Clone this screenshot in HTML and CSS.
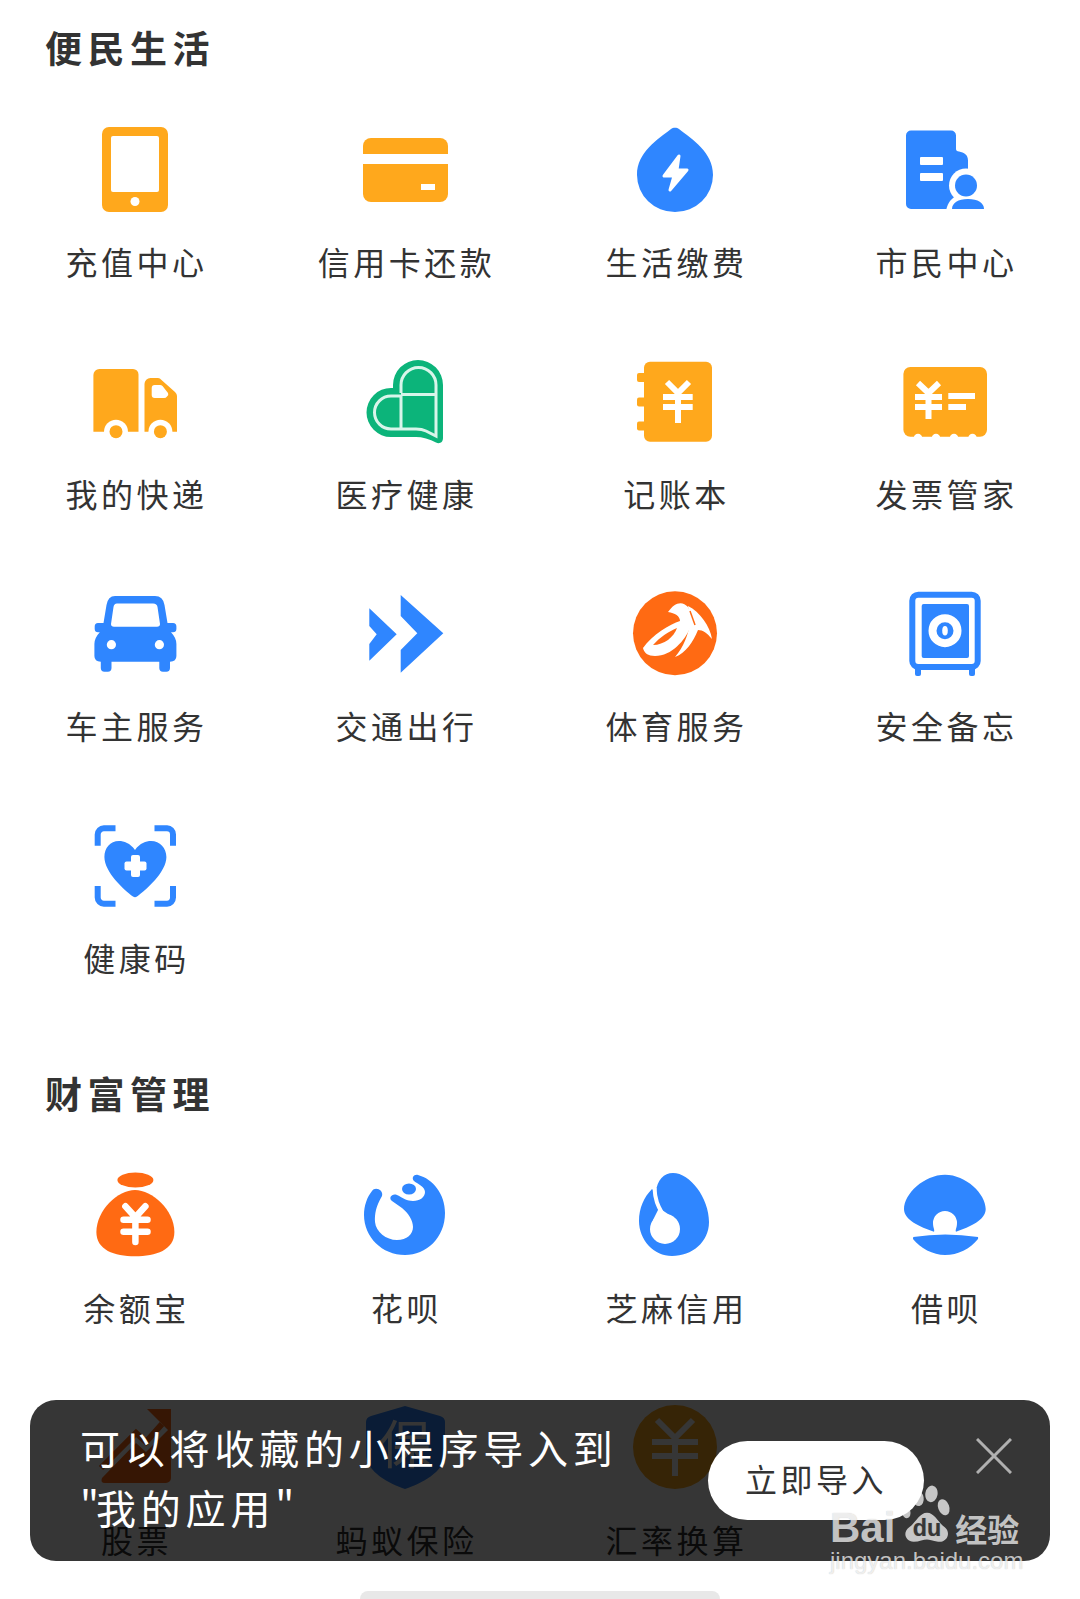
FILE: index.html
```html
<!DOCTYPE html>
<html lang="zh-CN">
<head>
    <meta charset="UTF-8">
    <meta name="viewport" content="width=device-width, initial-scale=1.0">
    <title>全部应用</title>
    <link rel="stylesheet" href="styles.css">
</head>
<body>
    <section class="section">
        <h2 class="section-title">便民生活</h2>
        <div class="app-grid">
            <div class="app">
                <svg class="icon" viewBox="0 0 90 90">
                    <rect x="12" y="3" width="66" height="85" rx="7" fill="#ffa81c"/>
                    <rect x="21" y="12" width="48" height="56" rx="2" fill="#fff"/>
                    <circle cx="45" cy="77.5" r="4.5" fill="#fff"/>
                </svg>
                <span class="app-name">充值中心</span>
            </div>
            <div class="app">
                <svg class="icon" viewBox="0 0 90 90">
                    <path d="M3 30v-8a8 8 0 0 1 8-8h69a8 8 0 0 1 8 8v8z" fill="#ffa81c"/>
                    <path d="M3 40h85v30a8 8 0 0 1-8 8H11a8 8 0 0 1-8-8z" fill="#ffa81c"/>
                    <rect x="61" y="60" width="14" height="6" fill="#fff"/>
                </svg>
                <span class="app-name">信用卡还款</span>
            </div>
            <div class="app">
                <svg class="icon" viewBox="0 0 90 90">
                    <path d="M41 5C43 3.2 47 3.2 49 5C62 15 83 28 83 51A38 37 0 0 1 7 51C7 28 28 15 41 5Z" fill="#2f86ff"/>
                    <path d="M49 32L34 52H44L40 66L57 46H47Z" fill="#fff" stroke="#fff" stroke-width="3" stroke-linejoin="round"/>
                </svg>
                <span class="app-name">生活缴费</span>
            </div>
            <div class="app">
                <svg class="icon" viewBox="0 0 90 90">
                    <path d="M11 6.500H51a5 5 0 0 1 5 5V25q0 2 3 2.500c5 1 9 3 9 9V85H11a5 5 0 0 1-5-5V11.500a5 5 0 0 1 5-5z" fill="#2f86ff"/>
                    <rect x="20" y="33" width="23" height="8" rx="1" fill="#fff"/>
                    <rect x="20" y="49" width="23" height="8" rx="1" fill="#fff"/>
                    <circle cx="66" cy="61.500" r="17" fill="#fff"/>
                    <path d="M46 90C46 76 56 70 66 70C78 70 88 76 90 90Z" fill="#fff"/>
                    <circle cx="66" cy="61.500" r="11" fill="#2f86ff"/>
                    <path d="M52 85C52 79 58 75 68 75C78 75 84 79 84 85Z" fill="#2f86ff"/>
                </svg>
                <span class="app-name">市民中心</span>
            </div>

            <div class="app">
                <svg class="icon" viewBox="0 0 90 90">
                    <path d="M3.400 75.700V19a6 6 0 0 1 6-6H43a5.500 5.500 0 0 1 5.500 5.500V75.700z" fill="#ffa81c"/>
                    <path d="M54.500 75.700V28a6 6 0 0 1 6-6H68q2 0 3.500 2L85 36q2 2 2 4V75.700z" fill="#ffa81c"/>
                    <path d="M61.700 32a3 3 0 0 1 3-3H70q1.500 0 2.500 1L78 37q1 2-1 3.500Q76 42 74 42H64.700a3 3 0 0 1-3-3z" fill="#fff"/>
                    <circle cx="26" cy="75.700" r="12" fill="#fff"/>
                    <circle cx="70.400" cy="75.700" r="12" fill="#fff"/>
                    <circle cx="26" cy="75.700" r="6.500" fill="#ffa81c"/>
                    <circle cx="70.400" cy="75.700" r="6.500" fill="#ffa81c"/>
                </svg>
                <span class="app-name">我的快递</span>
            </div>
            <div class="app">
                <svg class="icon" viewBox="0 0 90 90">
                    <path d="M33 32V29A25 25 0 0 1 83 29V82C83 87 79 88 76 86.500C70 83 62 81 56 81H31A24.500 24.500 0 0 1 31 32Z" fill="#0cb47a"/>
                    <path d="M41 37V29A17 17 0 0 1 76 29V80L66 75Q62 73 56 73H31A16.500 16.500 0 0 1 31 40H41V73M41 38.500H76" fill="none" stroke="#d8f5ea" stroke-width="3"/>
                </svg>
                <span class="app-name">医疗健康</span>
            </div>
            <div class="app">
                <svg class="icon" viewBox="0 0 90 90">
                    <rect x="14" y="5.700" width="68" height="80" rx="6" fill="#ffa81c"/>
                    <rect x="7" y="17" width="10" height="9" rx="2" fill="#ffa81c"/>
                    <rect x="7" y="41.500" width="10" height="9" rx="2" fill="#ffa81c"/>
                    <rect x="7" y="65.500" width="10" height="9" rx="2" fill="#ffa81c"/>
                    <path d="M37 26L48 37L59 26M33 41H62.700M33 51H62.700M48 37V67" fill="none" stroke="#fff" stroke-width="6"/>
                </svg>
                <span class="app-name">记账本</span>
            </div>
            <div class="app">
                <svg class="icon" viewBox="0 0 90 90">
                    <rect x="3.400" y="11" width="83.600" height="69.700" rx="7" fill="#ffa81c"/>
                    <circle cx="18" cy="82" r="4.200" fill="#fff"/>
                    <circle cx="36" cy="82" r="4.200" fill="#fff"/>
                    <circle cx="54" cy="82" r="4.200" fill="#fff"/>
                    <circle cx="72.500" cy="82" r="4.200" fill="#fff"/>
                    <path d="M18 27L28.500 37L39 27M15 41H42M15 51H42M28.500 37V63M48.300 40H75M48.300 51H66" fill="none" stroke="#fff" stroke-width="6"/>
                </svg>
                <span class="app-name">发票管家</span>
            </div>

            <div class="app">
                <svg class="icon" viewBox="0 0 90 90">
                    <path d="M25 8H65Q73 8 74.500 17L77.500 35H83A3.500 3.500 0 0 1 86.400 38.500V41A3.500 3.500 0 0 1 83 44.300H81Q86.400 50 86.400 56V68Q86.400 73.700 80 73.700V80A3.700 3.700 0 0 1 76.300 83.700H73A3.700 3.700 0 0 1 69.300 80V73.700H21.500V80A3.700 3.700 0 0 1 17.800 83.700H14.500A3.700 3.700 0 0 1 10.800 80V73.700Q4.400 73.700 4.400 68V56Q4.400 50 9.800 44.300H8A3.500 3.500 0 0 1 4.700 41V38.500A3.500 3.500 0 0 1 8 35H13.500L16.500 17Q18 8 25 8Z" fill="#2f86ff"/>
                    <path d="M27 15.500H63Q67 15.500 67.500 19L70 36Q70 38.700 67 38.700H24Q21 38.700 21 36L23.500 19Q24 15.500 27 15.500Z" fill="#fff"/>
                    <circle cx="21.400" cy="56.700" r="4.600" fill="#fff"/>
                    <circle cx="69.400" cy="56.700" r="4.600" fill="#fff"/>
                </svg>
                <span class="app-name">车主服务</span>
            </div>
            <div class="app">
                <svg class="icon" viewBox="0 0 90 90">
                    <path d="M9.300 20.300L36.700 46.300L9.300 72.700V56L16.700 46.300L9.300 38Z" fill="#2f86ff"/>
                    <path d="M40.700 7L83.300 45.300L40.700 84.700V62L57.300 45.300L40.700 28Z" fill="#2f86ff"/>
                </svg>
                <span class="app-name">交通出行</span>
            </div>
            <div class="app">
                <svg class="icon" viewBox="0 0 90 90">
                    <circle cx="45" cy="45.300" r="42" fill="#ff6a13"/>
                    <path d="M13 60C22 47 40 36 50 33C50 28 45 25 38 24C44 15 52 12 58 19C61 26 63 34 60 40C55 52 42 68 25 68C18 68 14 65 13 60Z" fill="#fff"/>
                    <path d="M23 57C30 49 38 44 47 40C44 49 34 57 23 57Z" fill="#ff6a13"/>
                    <path d="M58 18C70 24 80 38 82 51C77 45 73 42 68 42C63 54 56 65 45 69C54 59 58 46 60 36Z" fill="#fff"/>
                    <path d="M60 23L65 37" fill="none" stroke="#ff6a13" stroke-width="1.500"/>
                </svg>
                <span class="app-name">体育服务</span>
            </div>
            <div class="app">
                <svg class="icon" viewBox="0 0 90 90">
                    <rect x="15" y="76" width="6" height="12" rx="2" fill="#2f86ff"/>
                    <rect x="69" y="76" width="6" height="12" rx="2" fill="#2f86ff"/>
                    <rect x="12.300" y="6.700" width="65.400" height="72.300" rx="6" fill="#fff" stroke="#2f86ff" stroke-width="6"/>
                    <rect x="21.700" y="16" width="47.300" height="54" rx="2" fill="#2f86ff"/>
                    <circle cx="45" cy="42.700" r="12.500" fill="none" stroke="#fff" stroke-width="8"/>
                    <ellipse cx="45" cy="42.700" rx="2.800" ry="4.800" fill="#fff"/>
                </svg>
                <span class="app-name">安全备忘</span>
            </div>

            <div class="app">
                <svg class="icon" viewBox="0 0 90 90">
                    <path d="M7.700 25.700V14.500A6.200 6.200 0 0 1 14 8.300H25.500M64.500 8.300H77A6.200 6.200 0 0 1 83 14.500V25.700M83 66V77.500A6.200 6.200 0 0 1 77 83.700H64.500M25.500 83.700H14A6.200 6.200 0 0 1 7.700 77.500V66" fill="none" stroke="#2f86ff" stroke-width="6"/>
                    <path d="M45 30C40 23 34 21 29 21C20 21 14.400 28 14.400 37C14.400 52 34 70 43 76.500Q45 78 47 76.500C56 70 76.400 52 76.400 37C76.400 28 70 21 61 21C56 21 50 23 45 30Z" fill="#2f86ff"/>
                    <rect x="34.500" y="41.500" width="22" height="9" rx="2" fill="#fff"/>
                    <rect x="41" y="35" width="9" height="22" rx="2" fill="#fff"/>
                </svg>
                <span class="app-name">健康码</span>
            </div>
        </div>
    </section>

    <section class="section section-wealth">
        <h2 class="section-title">财富管理</h2>
        <div class="app-grid">
            <div class="app">
                <svg class="icon" viewBox="0 0 90 90">
                    <ellipse cx="45.400" cy="10" rx="18" ry="7.500" fill="#ff6a13"/>
                    <path d="M45 20C62 20 84.400 40 84.400 62C84.400 80 66 86.300 45 86.300C24 86.300 6.400 80 6.400 62C6.400 40 28 20 45 20Z" fill="#ff6a13"/>
                    <path d="M35.400 36.300L45.400 47.300L55.400 36.300M33.500 49.700H57.500M33.500 61.700H57.500M45.400 47.300V72" fill="none" stroke="#fff" stroke-width="6.500" stroke-linecap="round"/>
                </svg>
                <span class="app-name">余额宝</span>
            </div>
            <div class="app">
                <svg class="icon" viewBox="0 0 90 90">
                    <path d="M22 26C16 36 14.500 44 15 52C16 62 26 70 37 70C47 70 53 64 53 57C53 50 48 43 42 38L32 31C28 28 32 23 37 25C43 28 47 31 53 31C60 31 65 27 65 22C65 17 58 14 54 11C51 8 54 4 58 5C73 9 85 24 85 43C85 68 66 85 45 85C22 85 4 67 4 45C4 36 7 27 12 21C15 16 24 20 22 26Z" fill="#2f86ff"/>
                    <ellipse cx="49" cy="19" rx="7" ry="5.500" fill="#2f86ff"/>
                </svg>
                <span class="app-name">花呗</span>
            </div>
            <div class="app">
                <svg class="icon" viewBox="0 0 90 90">
                    <path d="M43 3C60 3 79 28 79 52C79 72 62 86 42 86C24 86 9 70 9 51C9 38 14 27 22 19L26 22C27 10 34 3 43 3Z" fill="#2f86ff"/>
                    <path d="M24.500 18C25 30 28 36 32 43" fill="none" stroke="#fff" stroke-width="4"/>
                    <path d="M29 38L23 50H47L35 42Z" fill="#fff"/>
                    <circle cx="35" cy="59" r="15" fill="#fff"/>
                </svg>
                <span class="app-name">芝麻信用</span>
            </div>
            <div class="app">
                <svg class="icon" viewBox="0 0 90 90">
                    <path d="M45 4.700C66 4.700 85.700 24 85.700 39C85.700 50 70 57 56 61.700C55 60 57 58 57 53A12 12 0 0 0 33 53C33 58 35 60 34 61.700C20 57 4 50 4 39C4 24 24 4.700 45 4.700Z" fill="#2f86ff"/>
                    <path d="M13.300 67Q45 62 78 67Q78.300 68 78 69C70 79 58 85 45 85C33 85 20 78 13 69Q13 68 13.300 67Z" fill="#2f86ff"/>
                </svg>
                <span class="app-name">借呗</span>
            </div>

            <div class="app">
                <svg class="icon" viewBox="0 0 90 90">
                    <path d="M12 76L46 41L56 50L81 25V76A5 5 0 0 1 76 81H15Q10 81 12 76Z" fill="#ff6a13"/>
                    <path d="M11 66L46 31L56 40L72 22" fill="none" stroke="#ff6a13" stroke-width="6"/>
                    <path d="M57 7H81V31Z" fill="#ff6a13"/>
                </svg>
                <span class="app-name">股票</span>
            </div>
            <div class="app">
                <svg class="icon" viewBox="0 0 90 90">
                    <path d="M45 4L80 14Q85 15.500 85 20V52C85 70 60 82 45 87C30 82 6 70 6 52V20Q6 15.500 11 14Z" fill="#2f86ff"/>
                    <text class="shield-text" x="45" y="62" text-anchor="middle">保</text>
                </svg>
                <span class="app-name">蚂蚁保险</span>
            </div>
            <div class="app">
                <svg class="icon" viewBox="0 0 90 90">
                    <circle cx="45" cy="45" r="42" fill="#ffa81c"/>
                    <path d="M27 18L45 36L63 18M22 40H68M22 54H68M45 36V74" fill="none" stroke="#fff" stroke-width="6"/>
                </svg>
                <span class="app-name">汇率换算</span>
            </div>
        </div>
    </section>

    <div class="toast">
        <p class="toast-text">可以将收藏的小程序导入到<br><span class="toast-quote">"</span>我的应用<span class="toast-quote">"</span></p>
        <button class="toast-btn">立即导入</button>
        <svg class="toast-close" viewBox="0 0 36 36">
            <path d="M1 1L35 35M35 1L1 35" fill="none" stroke="#b0b0b0" stroke-width="3"/>
        </svg>
    </div>

    <div class="watermark">
        <div class="watermark-logo">
            <span class="watermark-bai">Bai</span>
            <svg class="watermark-paw" viewBox="0 0 50 54">
                <ellipse cx="6" cy="24" rx="4" ry="6" transform="rotate(-15 6 24)"/>
                <ellipse cx="17" cy="12" rx="5" ry="7" transform="rotate(-10 17 12)"/>
                <ellipse cx="29" cy="8" rx="5.500" ry="7.500" transform="rotate(10 29 8)"/>
                <ellipse cx="40" cy="20" rx="5" ry="7.500" transform="rotate(-20 40 20)"/>
                <path d="M25 25C32 25 35 34 41 38C47 43 43 52 35 51C30 50 27 49 25 49C22 49 18 51 13 51C5 51 3 42 9 38C15 34 18 25 25 25Z"/>
                <text class="watermark-du" x="25" y="46" text-anchor="middle">du</text>
            </svg>
            <span class="watermark-cn">经验</span>
        </div>
        <div class="watermark-url">jingyan.baidu.com</div>
    </div>

    <div class="home-bar"></div>
</body>
</html>
```

FILE: styles.css
```css
* {
    margin: 0;
    padding: 0;
    box-sizing: border-box;
}

body {
    position: relative;
    width: 1080px;
    height: 1599px;
    overflow: hidden;
    background: #fff;
    color: #333;
    font-family: "Noto Sans CJK SC", "Noto Sans", sans-serif;
}

.section {
    padding-top: 22px;
}

.section-wealth {
    padding-top: 89px;
}

.section-title {
    padding-left: 45px;
    font-size: 37px;
    line-height: 50px;
    font-weight: 700;
    letter-spacing: 5.500px;
}

.app-grid {
    display: grid;
    grid-template-columns: repeat(4, 1fr);
    row-gap: 73px;
    margin-top: 52px;
}

.app {
    display: flex;
    flex-direction: column;
    align-items: center;
}

.icon {
    display: block;
    width: 90px;
    height: 90px;
}

.app-name {
    margin-top: 25px;
    padding-left: 3px;
    font-size: 32px;
    line-height: 44px;
    letter-spacing: 3.500px;
    white-space: nowrap;
}

.shield-text {
    font-size: 52px;
    fill: #fff;
}

.toast {
    position: absolute;
    top: 1400px;
    left: 30px;
    display: flex;
    align-items: center;
    width: 1020px;
    height: 161px;
    padding-left: 50px;
    border-radius: 26px;
    background: rgba(0, 0, 0, 0.79);
}

.toast-text {
    width: 628px;
    margin-bottom: 8px;
    color: #fff;
    font-size: 40px;
    line-height: 60px;
    letter-spacing: 4.800px;
}

.toast-quote {
    letter-spacing: -3px;
}

.toast-btn {
    width: 216px;
    height: 79px;
    padding-bottom: 5px;
    border: none;
    border-radius: 40px;
    background: #fff;
    color: #333;
    font-family: inherit;
    font-size: 32px;
    letter-spacing: 3.500px;
}

.toast-close {
    align-self: flex-start;
    width: 36px;
    height: 36px;
    margin-top: 38px;
    margin-left: 52px;
}

.watermark {
    position: absolute;
    top: 1484px;
    left: 830px;
    width: 196px;
    color: rgba(255, 255, 255, 0.72);
    text-shadow: 0 0 1px rgba(0, 0, 0, 0.25);
}

.watermark-logo {
    display: flex;
    align-items: flex-end;
    height: 66px;
}

.watermark-bai {
    font-family: "Liberation Sans", sans-serif;
    font-size: 42px;
    line-height: 44px;
    font-weight: 700;
}

.watermark-paw {
    width: 56px;
    height: 60px;
    margin-bottom: 5px;
    margin-left: 4px;
    fill: rgba(255, 255, 255, 0.72);
}

.watermark-du {
    font-family: "Liberation Sans", sans-serif;
    font-size: 21px;
    font-weight: 700;
    fill: #363636;
}

.watermark-cn {
    font-size: 32px;
    line-height: 44px;
    font-weight: 700;
}

.watermark-url {
    margin-top: -2px;
    font-family: "Liberation Sans", sans-serif;
    font-size: 24px;
    line-height: 26px;
    white-space: nowrap;
}

.home-bar {
    position: absolute;
    top: 1591px;
    left: 360px;
    width: 360px;
    height: 8px;
    border-radius: 8px 8px 0 0;
    background: #e8e8e8;
}
```
